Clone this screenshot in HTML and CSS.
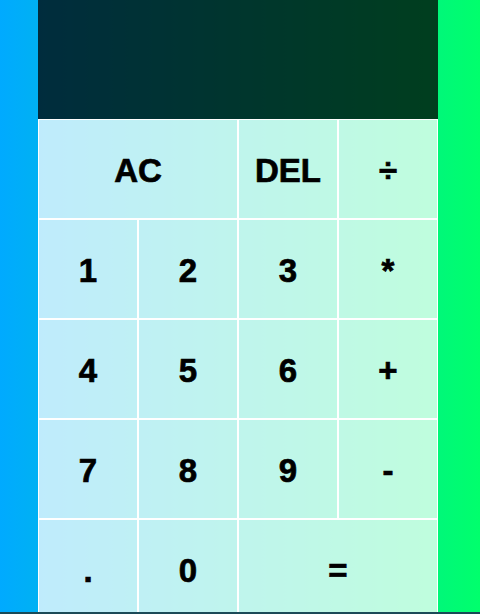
FILE: index.html
```html
<!DOCTYPE html>
<html lang="en">
<head>
<meta charset="utf-8">
<title>Calculator</title>
<link rel="stylesheet" href="styles.css">
</head>
<body>
<div class="calculator-grid">
  <div class="output">
    <div class="previous-operand"></div>
    <div class="current-operand"></div>
  </div>
  <button class="span-two">AC</button>
  <button>DEL</button>
  <button>÷</button>
  <button>1</button>
  <button>2</button>
  <button>3</button>
  <button>*</button>
  <button>4</button>
  <button>5</button>
  <button>6</button>
  <button>+</button>
  <button>7</button>
  <button>8</button>
  <button>9</button>
  <button>-</button>
  <button>.</button>
  <button>0</button>
  <button class="span-two">=</button>
</div>
</body>
</html>
```

FILE: styles.css
```css
*, *::before, *::after {
  box-sizing: border-box;
  font-family: "Liberation Sans", Arial, sans-serif;
  font-weight: normal;
}

html {
  background: #1b4a57;
}

body {
  margin: 0;
  padding: 0 0 0 38px;
  height: 612px;
  overflow: hidden;
  background: linear-gradient(to right, #00aaff, #00ff6c);
}

.calculator-grid {
  display: grid;
  grid-template-columns: repeat(4, 100px);
  grid-template-rows: 119px repeat(5, 100px);
}

.calculator-grid > button {
  cursor: pointer;
  font-size: 33px;
  font-weight: bold;
  -webkit-text-stroke: 0.7px #000;
  color: #000;
  border: 1px solid #fff;
  outline: none;
  margin: 0;
  padding: 3px 0 0;
  background-color: rgba(255, 255, 255, 0.75);
}

.span-two {
  grid-column: span 2;
}

.output {
  grid-column: 1 / -1;
  background-color: rgba(0, 0, 0, 0.75);
  display: flex;
  flex-direction: column;
  align-items: flex-end;
  justify-content: space-around;
  padding: 10px;
  word-wrap: break-word;
  word-break: break-all;
}
```
